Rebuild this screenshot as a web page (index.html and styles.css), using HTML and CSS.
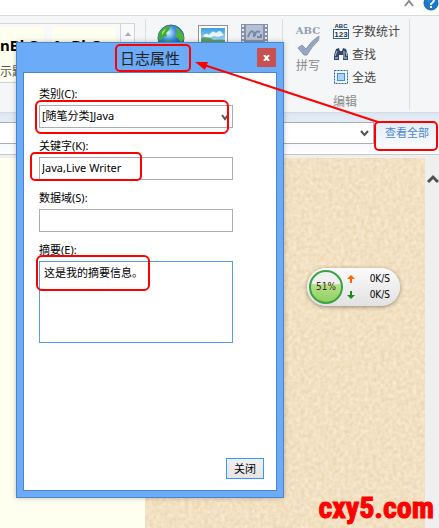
FILE: index.html
```
<!DOCTYPE html>
<html lang="zh-CN">
<head>
    <meta charset="UTF-8">
    <meta name="viewport" content="width=device-width, initial-scale=1.0">
    <title>日志属性</title>
    <link rel="stylesheet" href="styles.css">
</head>
<body>

<div class="app">
    <div class="topbar">
        <svg class="collapse" width="10" height="8" viewBox="0 0 10 8"><path d="M1 6 L5 1 L9 6" fill="none" stroke="#8a8a8a" stroke-width="2"/></svg>
        <svg class="help" width="16" height="11" viewBox="0 0 16 11">
            <circle cx="8" cy="3" r="7" fill="#1979ca" stroke="#0f62ab"/>
            <path d="M5 0 Q8 -4 11 0 Q11 2 8 4 V5" fill="none" stroke="#fff" stroke-width="2"/>
            <rect x="7" y="6" width="2" height="2" fill="#fff"/>
        </svg>
    </div>

    <div class="ribbon">
        <div class="group group-styles">
            <div class="gallery">
                <div class="style-item style-first"><b>nBl C</b><span>示题</span></div>
                <div class="style-item style-second"><b>AaBbCc</b></div>
                <div class="gallery-scroll"><svg width="6" height="4" viewBox="0 0 6 4"><path d="M0 4 L3 0 L6 4Z" fill="#a9adb8"/></svg></div>
            </div>
        </div>
        <div class="group group-insert">
            <svg width="28" height="28" viewBox="0 0 28 28">
                <defs>
                    <radialGradient id="sea" cx="0.4" cy="0.3" r="0.7"><stop offset="0" stop-color="#d4f0ff"/><stop offset="0.4" stop-color="#3e8fe0"/><stop offset="1" stop-color="#133d94"/></radialGradient>
                </defs>
                <circle cx="14" cy="14" r="13" fill="url(#sea)" stroke="#3b66a5"/>
                <path d="M8 3 L14 2 L12 6 L9 9 L10 12 L5 14 L3 18 L1 13 Q2 6 8 3Z" fill="#3fae36"/>
                <path d="M18 3 L22 5 L26 10 L27 15 L24 19 L21 14 L18 12 L20 8Z" fill="#4cb63c"/>
                <path d="M9 16 L15 18 L14 23 L11 26 L8 22Z" fill="#3fae36"/>
                <path d="M5 8 L9 4 L8 7 L5 11Z" fill="#a3df7c"/>
            </svg>
            <svg width="30" height="28" viewBox="0 0 30 28">
                <defs>
                    <linearGradient id="sky" x2="0" y2="1"><stop offset="0" stop-color="#3c9fe4"/><stop offset="1" stop-color="#dff3fc"/></linearGradient>
                </defs>
                <rect x="0.5" y="1.5" width="29" height="25" fill="#fff" stroke="#8c9299"/>
                <rect x="3" y="4" width="24" height="20" fill="url(#sky)"/>
                <path d="M5 12 Q8 8 11 11 Q15 5 18 9 Q22 5 24 9 L26 11 Q20 14 16 12 Q9 15 5 12Z" fill="#fff" opacity="0.85"/>
                <path d="M3 14 Q10 12 16 16 Q22 15 27 16 V24 H3Z" fill="#5f9f67"/>
            </svg>
            <svg width="27" height="28" viewBox="0 0 27 28">
                <rect width="27" height="28" fill="#8792a8"/>
                <rect x="5" y="1" width="17" height="15" fill="#b5c0d4"/>
                <rect x="5" y="18" width="17" height="10" fill="#a4b1c8"/>
                <path d="M2 1V28M25 1V28" stroke="#e8ecf2" stroke-width="2" stroke-dasharray="2 2"/>
                <path d="M7 13 Q10 4 13 9 V13 M14 12 Q14 6 19 8 M16 13 H20 V10" fill="none" stroke="#7788a8" stroke-width="2"/>
            </svg>
        </div>
        <div class="group group-edit">
            <div class="edit-main">
                <button type="button" class="spell">
                    <span class="abc">ABC</span>
                    <svg width="23" height="20" viewBox="0 0 23 20"><path d="M1 12 L5 9 L9 13 Q14 5 22 0 Q22 4 21 5 Q15 10 10 19 L7 19Z" fill="#98a7c1" stroke="#8796b3"/></svg>
                    <span>拼写</span>
                </button>
                <div class="edit-list">
                    <button type="button" class="tool">
                        <svg width="16" height="16" viewBox="0 0 16 16">
                            <text x="8" y="5" class="mini-abc">ABC</text>
                            <rect x="0.5" y="6.5" width="15" height="9" fill="#fff" stroke="#2a6496"/>
                            <text x="8" y="14" class="mini-num">123</text>
                        </svg>
                        字数统计
                    </button>
                    <button type="button" class="tool">
                        <svg width="16" height="16" viewBox="0 0 16 16">
                            <path d="M3 3 L6 2 L7 5 H9 L10 2 L13 3 L15 9 V14 H10 V9 H6 V14 H1 V9Z" fill="#34486b"/>
                            <path d="M4 5 L2 10 M11 5 L11 12 M13 6 L14 10" stroke="#b7c6df"/>
                            <rect x="2" y="11" width="3" height="2" fill="#7f96bd"/><rect x="11" y="11" width="3" height="2" fill="#7f96bd"/>
                        </svg>
                        查找
                    </button>
                    <button type="button" class="tool">
                        <svg width="16" height="16" viewBox="0 0 16 16">
                            <rect x="1.5" y="1.5" width="13" height="13" fill="none" stroke="#1f5f9e" stroke-dasharray="2 1"/>
                            <rect x="4.5" y="4.5" width="7" height="7" fill="#a9d6fb" stroke="#3f8ede"/>
                        </svg>
                        全选
                    </button>
                </div>
            </div>
            <div class="group-name">编辑</div>
        </div>
    </div>

    <div class="propbar">
        <div class="prop-combo"><svg width="9" height="7" viewBox="0 0 9 7"><path d="M1 1 L4.5 5 L8 1" fill="none" stroke="#555" stroke-width="2"/></svg></div>
        <a href="#" class="view-all">查看全部</a>
    </div>

    <div class="content">
        <div class="page"></div>
        <svg class="paper" width="100%" height="100%">
            <filter id="grain" x="0" y="0" width="100%" height="100%" color-interpolation-filters="sRGB">
                <feTurbulence type="fractalNoise" baseFrequency="0.25" numOctaves="2" seed="4"/>
                <feColorMatrix values="0.08 0 0 0 0.91  0.12 0 0 0 0.82  0.2 0 0 0 0.66  0 0 0 0 1"/>
            </filter>
            <rect width="100%" height="100%" fill="#f2e1c2" filter="url(#grain)"/>
        </svg>
        <div class="scrollbar"><svg width="12" height="10" viewBox="0 0 12 10"><path d="M1 8 L6 3 L11 8" fill="none" stroke="#505050" stroke-width="3"/></svg></div>
    </div>

    <form class="dialog">
        <div class="dialog-title">
            <h1>日志属性</h1>
            <button type="button" class="close" aria-label="关闭"><svg width="7" height="6" viewBox="0 0 7 6"><path d="M1 0 L6 6 M6 0 L1 6" stroke="#fff" stroke-width="2"/></svg></button>
        </div>
        <div class="dialog-body">
            <div class="fields">
                <div class="field">
                    <label for="category">类别(C):</label>
                    <div class="select-wrap">
                        <select id="category"><option>[随笔分类]Java</option></select>
                        <svg width="8" height="7" viewBox="0 0 8 7"><path d="M1 1 L4 5 L7 1" fill="none" stroke="#555" stroke-width="2"/></svg>
                    </div>
                </div>
                <div class="field">
                    <label for="keywords">关键字(K):</label>
                    <input type="text" id="keywords" value="Java,Live Writer">
                </div>
                <div class="field">
                    <label for="slug">数据域(S):</label>
                    <input type="text" id="slug">
                </div>
                <div class="field">
                    <label for="excerpt">摘要(E):</label>
                    <textarea id="excerpt">这是我的摘要信息。</textarea>
                </div>
            </div>
            <div class="dialog-footer"><button type="button" class="ok">关闭</button></div>
        </div>
    </form>

    <div class="netspeed">
        <div class="ball">51%</div>
        <div class="rates">
            <div class="rate"><svg width="8" height="8" viewBox="0 0 8 8"><path d="M4 0 L8 4 H5 V8 H3 V4 H0Z" fill="#f60"/></svg><span>0K/S</span></div>
            <div class="rate"><svg width="8" height="8" viewBox="0 0 8 8"><path d="M4 8 L8 4 H5 V0 H3 V4 H0Z" fill="#1d8a1d"/></svg><span>0K/S</span></div>
        </div>
    </div>

    <!-- red marks over the dialog -->
    <svg class="marks" width="439" height="300" viewBox="0 0 439 300">
        <g fill="none" stroke="#f00" stroke-width="2">
            <rect x="116" y="45" width="74" height="26" rx="4"/>
            <rect x="36" y="101" width="192" height="32" rx="5"/>
            <rect x="31" y="153" width="110" height="27" rx="4"/>
            <rect x="37" y="256" width="112" height="34" rx="5"/>
            <rect x="375" y="122" width="62" height="28" rx="4"/>
            <path d="M378 122 L204 65"/>
        </g>
        <path d="M195 62 L208 62 L205 70Z" fill="#f00"/>
    </svg>

    <div class="watermark">cxy5.com</div>
</div>

</body>
</html>
```

FILE: styles.css
```
* {
    box-sizing: border-box;
}
body {
    margin: 0;
    font-family: "Noto Sans", "Noto Sans CJK SC", sans-serif;
    font-size: 11px;
    color: #000;
    background-color: #fff;
}
svg {
    display: block;
    flex: none;
}
button,
input,
select,
textarea {
    font: inherit;
    color: inherit;
    border-radius: 0;
}
.app {
    position: relative;
    display: flex;
    flex-direction: column;
    min-height: 100vh;
    overflow: hidden;
}

/* top bar and ribbon */
.topbar {
    display: flex;
    justify-content: flex-end;
    gap: 9px;
    height: 15px;
}
.ribbon {
    display: flex;
    height: 98px;
    padding-top: 3px;
    background-color: #f5f6f7;
    border-top: 1px solid #dadbdc;
    border-bottom: 1px solid #d5dae0;
    font-size: 12px;
}
.group {
    height: 91px;
    border-right: 1px solid #dcdddf;
}
.group-styles {
    width: 146px;
    padding: 4px 10px 0 0;
}
.gallery {
    display: flex;
    height: 60px;
    background-color: #f9f9f9;
    border: 1px solid #d3d4d8;
    border-left: none;
}
.style-item {
    height: 54px;
    margin-top: 3px;
    white-space: nowrap;
    background-color: #fffff0;
}
.style-item b {
    display: block;
    line-height: 36px;
    font-size: 15px;
}
.style-first {
    width: 44px;
    margin-right: 8px;
}
.style-first span {
    display: block;
    line-height: 18px;
    color: #555;
}
.style-second {
    width: 64px;
}
.gallery-scroll {
    display: flex;
    justify-content: center;
    width: 14px;
    margin-left: auto;
    padding-top: 8px;
    border-left: 1px solid #d3d4d8;
}
.group-insert {
    display: flex;
    justify-content: space-between;
    width: 137px;
    padding: 5px 14px 0 11px;
}
.group-edit {
    width: 127px;
    padding: 4px 0 0 11px;
}
.edit-main {
    display: flex;
    gap: 11px;
}
.spell,
.tool {
    display: flex;
    padding: 0;
    border: none;
    background: none;
    cursor: pointer;
}
.spell {
    flex-direction: column;
    align-items: center;
    width: 28px;
    padding-top: 1px;
    line-height: 16px;
    color: #8a8a8a;
}
.spell .abc {
    height: 12px;
    line-height: 14px;
    font-family: "DejaVu Serif", serif;
    font-size: 10px;
    font-weight: bold;
    color: #909db5;
}
.spell svg {
    margin-bottom: 2px;
}
.edit-list {
    display: flex;
    flex-direction: column;
    gap: 7px;
}
.tool {
    gap: 3px;
    align-items: center;
    height: 16px;
    color: #444;
    white-space: nowrap;
}
.mini-abc,
.mini-num {
    font-family: "Liberation Sans", sans-serif;
    font-size: 6px;
    font-weight: bold;
    text-anchor: middle;
    fill: #234;
}
.mini-num {
    font-size: 8px;
}
.group-name {
    margin-top: 9px;
    padding-left: 39px;
    line-height: 16px;
    color: #8a8a8a;
}

/* post property bar */
.propbar {
    display: flex;
    align-items: flex-start;
    height: 42px;
    padding-top: 9px;
    background-image: linear-gradient(#dce7f3, #fff);
    border-bottom: 1px solid #c8c8c8;
}
.prop-combo {
    display: flex;
    flex: 1;
    align-items: center;
    justify-content: flex-end;
    height: 22px;
    padding-right: 4px;
    background-color: #fff;
    border: 1px solid #abadb3;
    border-left: none;
}
.view-all {
    width: 65px;
    padding-left: 11px;
    line-height: 22px;
    color: #4c88d3;
    text-decoration: none;
}

/* editor */
.content {
    display: flex;
    flex: 1;
    padding-top: 3px;
    background-color: #efefef;
}
.page {
    width: 145px;
    background-color: #fffff0;
}
.paper {
    flex: 1;
    height: auto;
}
.scrollbar {
    width: 14px;
    padding: 16px 0 0 2px;
    background-color: #efefef;
}

/* dialog */
.dialog {
    position: absolute;
    left: 16px;
    top: 42px;
    width: 268px;
    padding: 0 6px 6px;
    background-color: #6babf8;
    border: 1px solid #4a86c8;
    box-shadow: 0 0 5px rgba(0, 0, 0, 0.25);
}
.dialog-title {
    display: flex;
    align-items: center;
    justify-content: center;
    position: relative;
    height: 29px;
}
.dialog-title h1 {
    margin: 0;
    font-size: 15px;
    font-weight: normal;
    color: #222;
}
.close {
    position: absolute;
    top: 5px;
    right: 1px;
    display: flex;
    align-items: center;
    justify-content: center;
    width: 19px;
    height: 19px;
    padding: 0;
    border: none;
    background-color: #c75050;
}
.dialog-body {
    background-color: #fff;
    border: 1px solid #4a86c8;
}
.fields {
    display: flex;
    flex-direction: column;
    gap: 10px;
    padding: 13px 43px 0 15px;
}
.field label {
    display: block;
    margin-bottom: 3px;
    line-height: 16px;
}
.field input,
.field select,
.field textarea {
    display: block;
    width: 100%;
    height: 23px;
    padding: 0 2px 2px;
    border: 1px solid #abadb3;
    background-color: #fff;
    outline: none;
}
.select-wrap {
    position: relative;
}
.field select {
    appearance: none;
}
.select-wrap svg {
    position: absolute;
    right: 4px;
    top: 9px;
}
.field textarea {
    height: 82px;
    padding: 3px 4px;
    line-height: 16px;
    border-color: #569de5;
    resize: none;
}
.dialog-footer {
    display: flex;
    justify-content: flex-end;
    padding: 115px 12px 11px;
}
.ok {
    width: 38px;
    height: 21px;
    padding: 0;
    line-height: 16px;
    border: 1px solid #3399ff;
    background-image: linear-gradient(#f0f0f0, #e5e5e5);
}

/* network speed ball */
.netspeed {
    position: absolute;
    left: 307px;
    top: 268px;
    display: flex;
    align-items: center;
    gap: 4px;
    width: 93px;
    height: 38px;
    padding: 0 10px 0 2px;
    font-family: "DejaVu Sans Condensed", "DejaVu Sans", sans-serif;
    font-size: 10px;
    background-image: linear-gradient(#fafafa, #e2e2e2);
    border-radius: 19px;
    box-shadow: 0 1px 4px rgba(0, 0, 0, 0.4);
}
.ball {
    width: 34px;
    height: 34px;
    line-height: 30px;
    text-align: center;
    color: #4a2a10;
    background-image: linear-gradient(#f0f0f0 40%, #b4e08c 42%, #8fd060);
    border: 2px solid #3ba243;
    border-radius: 50%;
}
.rates {
    flex: 1;
}
.rate {
    display: flex;
    align-items: center;
    justify-content: space-between;
    line-height: 16px;
}

.marks {
    position: absolute;
    left: 0;
    top: 0;
    pointer-events: none;
}
.watermark {
    position: absolute;
    right: 5px;
    bottom: 2px;
    line-height: 36px;
    font-family: "Liberation Sans Narrow", "Roboto Condensed", "Open Sans Condensed", "DejaVu Sans Condensed", sans-serif;
    font-size: 30px;
    font-weight: bold;
    color: #f00;
    -webkit-text-stroke: 1px #f00;
}
```
